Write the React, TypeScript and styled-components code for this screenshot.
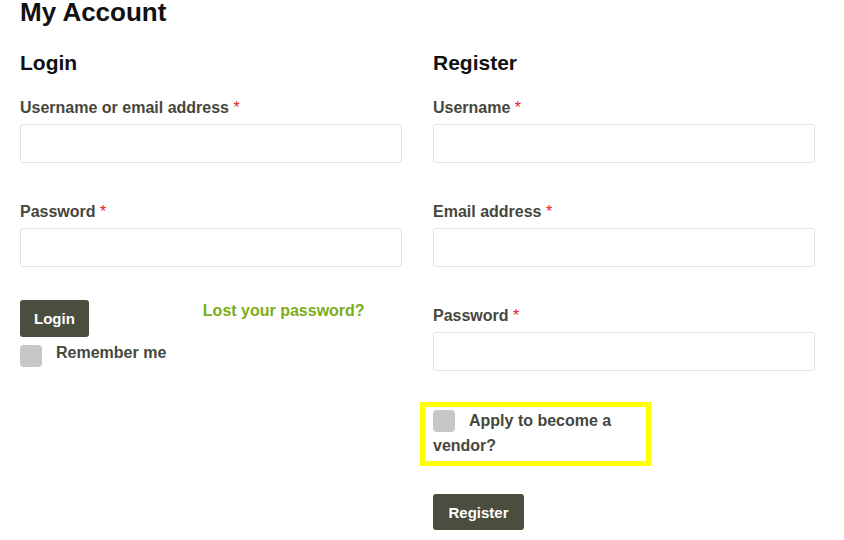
import React from 'react';
import styled, { createGlobalStyle } from 'styled-components';

const GlobalStyle = createGlobalStyle`
  html, body {
    margin: 0;
    padding: 0;
    background: #ffffff;
    font-family: "Liberation Sans", Arial, sans-serif;
  }
`;

const Page = styled.div`
  padding: 0 20px;
  width: 795px;
`;

const Title = styled.h1`
  margin: -3px 0 0;
  font-size: 26px;
  line-height: 31px;
  font-weight: bold;
  color: #111111;
`;

const Columns = styled.div`
  display: grid;
  grid-template-columns: 382px 382px;
  column-gap: 31px;
  margin-top: 22px;
`;

const Column = styled.div`
  display: flex;
  flex-direction: column;
`;

const Heading = styled.h2`
  margin: 0 0 21px;
  font-size: 21px;
  line-height: 25px;
  font-weight: bold;
  color: #111111;
`;

const Field = styled.div`
  margin-bottom: 37px;
`;

const Label = styled.label`
  display: block;
  font-size: 16px;
  line-height: 24px;
  font-weight: bold;
  color: #46473c;
  margin-bottom: 4px;
`;

const Required = styled.span`
  color: #e2231a;
  font-weight: normal;
`;

const Input = styled.input`
  display: block;
  box-sizing: border-box;
  width: 100%;
  height: 39px;
  border: 1px solid #e2e2e2;
  border-radius: 3px;
  background: #ffffff;
  outline: none;
`;

// buttons differ a little in height and side padding
const Button = styled.button<{ $h?: number; $px?: number }>`
  box-sizing: border-box;
  height: ${(p) => p.$h ?? 37}px;
  padding: 0 ${(p) => p.$px ?? 15}px;
  border: none;
  border-radius: 3px;
  background: #4a4e3e;
  color: #ffffff;
  font-family: "Liberation Sans", Arial, sans-serif;
  font-size: 15px;
  font-weight: bold;
  cursor: pointer;
`;

const ActionRow = styled.div`
  display: flex;
  align-items: flex-start;
  margin-top: -4px;
`;

const LostLink = styled.a`
  margin-left: 114px;
  margin-top: 1px;
  font-size: 16px;
  line-height: 20px;
  font-weight: bold;
  color: #7cac18;
  text-decoration: none;
`;

const CheckRow = styled.label`
  display: flex;
  align-items: flex-start;
  margin-top: 8px;
  font-size: 16px;
  font-weight: bold;
  color: #46473c;
`;

const Box = styled.span`
  display: inline-block;
  width: 22px;
  height: 22px;
  border-radius: 4px;
  background: #c6c6c6;
  flex-shrink: 0;
`;

const RememberText = styled.span`
  margin: -1px 0 0 14px;
  line-height: 18px;
`;

const VendorBox = styled.label`
  display: block;
  box-sizing: border-box;
  width: 231px;
  margin: -6px 0 0 -13px;
  padding: 1px 8px 3px 8px;
  border: 5px solid #ffff00;
  font-size: 16px;
  line-height: 25px;
  font-weight: bold;
  color: #46473c;

  ${Box} {
    vertical-align: -6px;
    margin-right: 14px;
  }
`;

const RegisterWrap = styled.div`
  margin-top: 28px;
`;

const App = () => {
  return (
    <Page>
      <GlobalStyle />
      <Title>My Account</Title>
      <Columns>
        <Column>
          <Heading>Login</Heading>
          <Field>
            <Label>
              Username or email address <Required>*</Required>
            </Label>
            <Input type="text" />
          </Field>
          <Field>
            <Label>
              Password <Required>*</Required>
            </Label>
            <Input type="password" />
          </Field>
          <ActionRow>
            <Button $px={14}>Login</Button>
            <LostLink href="#">Lost your password?</LostLink>
          </ActionRow>
          <CheckRow>
            <Box />
            <RememberText>Remember me</RememberText>
          </CheckRow>
        </Column>
        <Column>
          <Heading>Register</Heading>
          <Field>
            <Label>
              Username <Required>*</Required>
            </Label>
            <Input type="text" />
          </Field>
          <Field>
            <Label>
              Email address <Required>*</Required>
            </Label>
            <Input type="email" />
          </Field>
          <Field>
            <Label>
              Password <Required>*</Required>
            </Label>
            <Input type="password" />
          </Field>
          <VendorBox>
            <Box />
            Apply to become a vendor?
          </VendorBox>
          <RegisterWrap>
            <Button $h={36} $px={15.5}>Register</Button>
          </RegisterWrap>
        </Column>
      </Columns>
    </Page>
  );
};

export default App;
